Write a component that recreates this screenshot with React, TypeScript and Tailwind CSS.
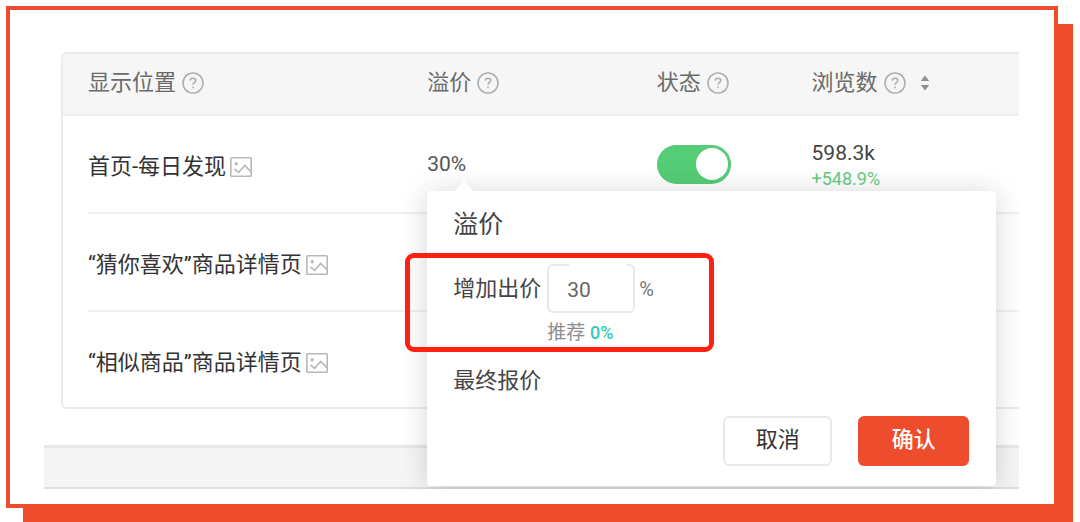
import React, { useState } from 'react';

const placements = [
  { id: 'home', name: '首页-每日发现', premium: '30%', enabled: true, views: '598.3k', change: '+548.9%' },
  { id: 'guess', name: '“猜你喜欢”商品详情页' },
  { id: 'similar', name: '“相似商品”商品详情页' },
];

function HelpIcon() {
  return (
    <svg className="w-[22px] h-[22px] shrink-0" viewBox="0 0 22 22" fill="none" stroke="#b0b0b0" strokeWidth="1.6">
      <circle cx="11" cy="11" r="10" />
      <path d="M8.2 8.6c.1-1.6 1.3-2.4 2.8-2.4s2.8.9 2.8 2.3c0 1.9-2.7 2-2.7 4.3" />
      <path d="M11.1 14.4v1.8" />
    </svg>
  );
}

function PictureIcon() {
  return (
    <svg className="w-[22px] h-5 shrink-0" viewBox="0 0 22 20" fill="none" stroke="#b8b8b8" strokeWidth="1.6">
      <rect x="0.8" y="0.8" width="20.4" height="18.4" rx="0.8" />
      <path d="M4.5 12l4.2 3.3 6-6.8 6.4 6.4" />
      <circle cx="6.2" cy="6.8" r="0.9" />
    </svg>
  );
}

function SortIcon() {
  return (
    <svg className="w-[10px] h-4 shrink-0" viewBox="0 0 10 16" fill="#8f8f8f">
      <path d="M5 0.5L9.2 6H0.8zM5 15.5L0.8 10h8.4z" />
    </svg>
  );
}

function PremiumPopover() {
  const [bid, setBid] = useState('30');

  return (
    <div
      role="dialog"
      aria-label="溢价"
      className="absolute left-0 top-[75px] z-10 w-[569px] h-[295px] rounded bg-white shadow-[0_2px_28px_rgba(0,0,0,0.17)] pl-[26px] pr-[27px] pt-[18px] pb-5 flex flex-col"
    >
      {/* Arrow */}
      <svg className="absolute left-[27px] -top-[10px] w-5 h-[11px]" viewBox="0 0 20 11" fill="#fff">
        <path d="M10 0l10 11H0z" />
      </svg>

      <h2 className="text-[25px] leading-8 text-[#444]">溢价</h2>

      <div className="relative mt-[23px] self-start">
        <div className="flex items-center h-[49px]">
          <label htmlFor="bid" className="text-[22px] leading-8 text-[#444]">增加出价</label>
          <div className="relative ml-[6px]">
            <input
              id="bid"
              type="text"
              value={bid}
              onChange={(e) => setBid(e.target.value)}
              className="block w-[88px] h-[49px] pl-[18px] pt-[2px] rounded-md border-2 border-[#e8e8e8] text-[21px] text-[#666] outline-none"
            />
            <span className="absolute left-[22px] top-0 w-[58px] h-[2px] bg-white" />
          </div>
          <span className="ml-1 text-[20px] leading-8 text-[#777]">%</span>
        </div>
        <p className="pl-[94px] mt-[6px] text-[19px] leading-7 text-[#8c8c8c]">
          推荐 <span className="text-[18px] font-medium text-[#2fcdb8]">0%</span>
        </p>

        {/* Highlight */}
        <div className="absolute -left-12 -top-[11px] w-[309px] h-[99px] rounded-[9px] border-[5px] border-[#ff2013] pointer-events-none" />
      </div>

      <p className="mt-[18px] text-[22px] leading-8 text-[#444]">最终报价</p>

      <div className="mt-auto flex justify-end gap-[26px]">
        <button type="button" className="w-[109px] h-[50px] pb-[2px] rounded-md border-2 border-[#e8e8e8] bg-white text-[22px] leading-8 text-[#333]">
          取消
        </button>
        <button type="button" className="w-[111px] h-[50px] pb-[2px] rounded-md bg-[#ee4d2d] text-[22px] leading-8 font-medium text-white">
          确认
        </button>
      </div>
    </div>
  );
}

export default function App() {
  const [enabled, setEnabled] = useState(true);

  return (
    <div className="bg-white pt-[6px] pl-[6px] pr-[22px] pb-[14px] overflow-hidden font-['Roboto','Noto_Sans_CJK_SC',sans-serif]">
      <main className="border-4 border-[#ee4d2d] bg-white shadow-[16px_17px_0_-1px_#ee4d2d] pt-[42px] pl-[34px] pr-[35px] pb-[15px]">
        <div className="overflow-hidden">
          <div className="ml-[17px] rounded-l-md border-2 border-r-0 border-[#ebebeb]">
            <table className="w-full table-fixed border-separate border-spacing-0 text-left text-[22px] leading-8">
              <thead>
                <tr className="h-[62px] text-[#6a6a6a]">
                  <th className="w-[38.1%] p-0 pl-[25px] pb-[2px] rounded-tl bg-[#f6f6f6] border-b-2 border-[#efefef] font-normal">
                    <div className="flex items-center gap-[6px]">显示位置<HelpIcon /></div>
                  </th>
                  <th className="w-[24%] p-0 pb-[2px] bg-[#f6f6f6] border-b-2 border-[#efefef] font-normal">
                    <div className="flex items-center gap-[6px]">溢价<HelpIcon /></div>
                  </th>
                  <th className="w-[16.2%] p-0 pb-[2px] bg-[#f6f6f6] border-b-2 border-[#efefef] font-normal">
                    <div className="flex items-center gap-[6px]">状态<HelpIcon /></div>
                  </th>
                  <th className="p-0 pb-[2px] bg-[#f6f6f6] border-b-2 border-[#efefef] font-normal">
                    <div className="flex items-center gap-[6px]">
                      浏览数<HelpIcon />
                      <button type="button" aria-label="排序" className="ml-2"><SortIcon /></button>
                    </div>
                  </th>
                </tr>
              </thead>
              <tbody className="[&>tr:last-child_.line]:border-b-0">
                {placements.map((row) => (
                  <tr key={row.id} className="group text-[#333]">
                    <td className="p-0 pl-[25px]">
                      <div className="line flex items-center gap-1 h-[98px] group-last:h-[95px] pt-[6px] border-b-2 border-[#f0f0f0]">
                        {row.name}<PictureIcon />
                      </div>
                    </td>
                    <td className="line relative p-0 border-b-2 border-[#f0f0f0] text-[21px] text-[#555]">
                      {row.premium}
                      {row.premium && <PremiumPopover />}
                    </td>
                    <td className="line p-0 border-b-2 border-[#f0f0f0]">
                      {row.enabled && (
                        <label className={`relative flex items-center w-[74px] h-[39px] px-[3px] rounded-full cursor-pointer ${enabled ? 'justify-end bg-[#55cc77]' : 'justify-start bg-gray-300'}`}>
                          <input
                            type="checkbox"
                            role="switch"
                            aria-label="状态"
                            checked={enabled}
                            onChange={(e) => setEnabled(e.target.checked)}
                            className="appearance-none absolute inset-0"
                          />
                          <span className="w-8 h-8 rounded-full bg-white" />
                        </label>
                      )}
                    </td>
                    <td className="line p-0 border-b-2 border-[#f0f0f0]">
                      {row.views && (
                        <div className="pt-[2px]">
                          <div className="text-[21px] leading-7 text-[#444]">{row.views}</div>
                          <div className="text-[18px] leading-6 text-[#66cc80]">{row.change}</div>
                        </div>
                      )}
                    </td>
                  </tr>
                ))}
              </tbody>
            </table>
          </div>

          <div className="mt-9 h-11 bg-[#f5f5f5] border-t-[3px] border-b-2 border-t-[#e8e8e8] border-b-[#dedede]" />
        </div>
      </main>
    </div>
  );
}
